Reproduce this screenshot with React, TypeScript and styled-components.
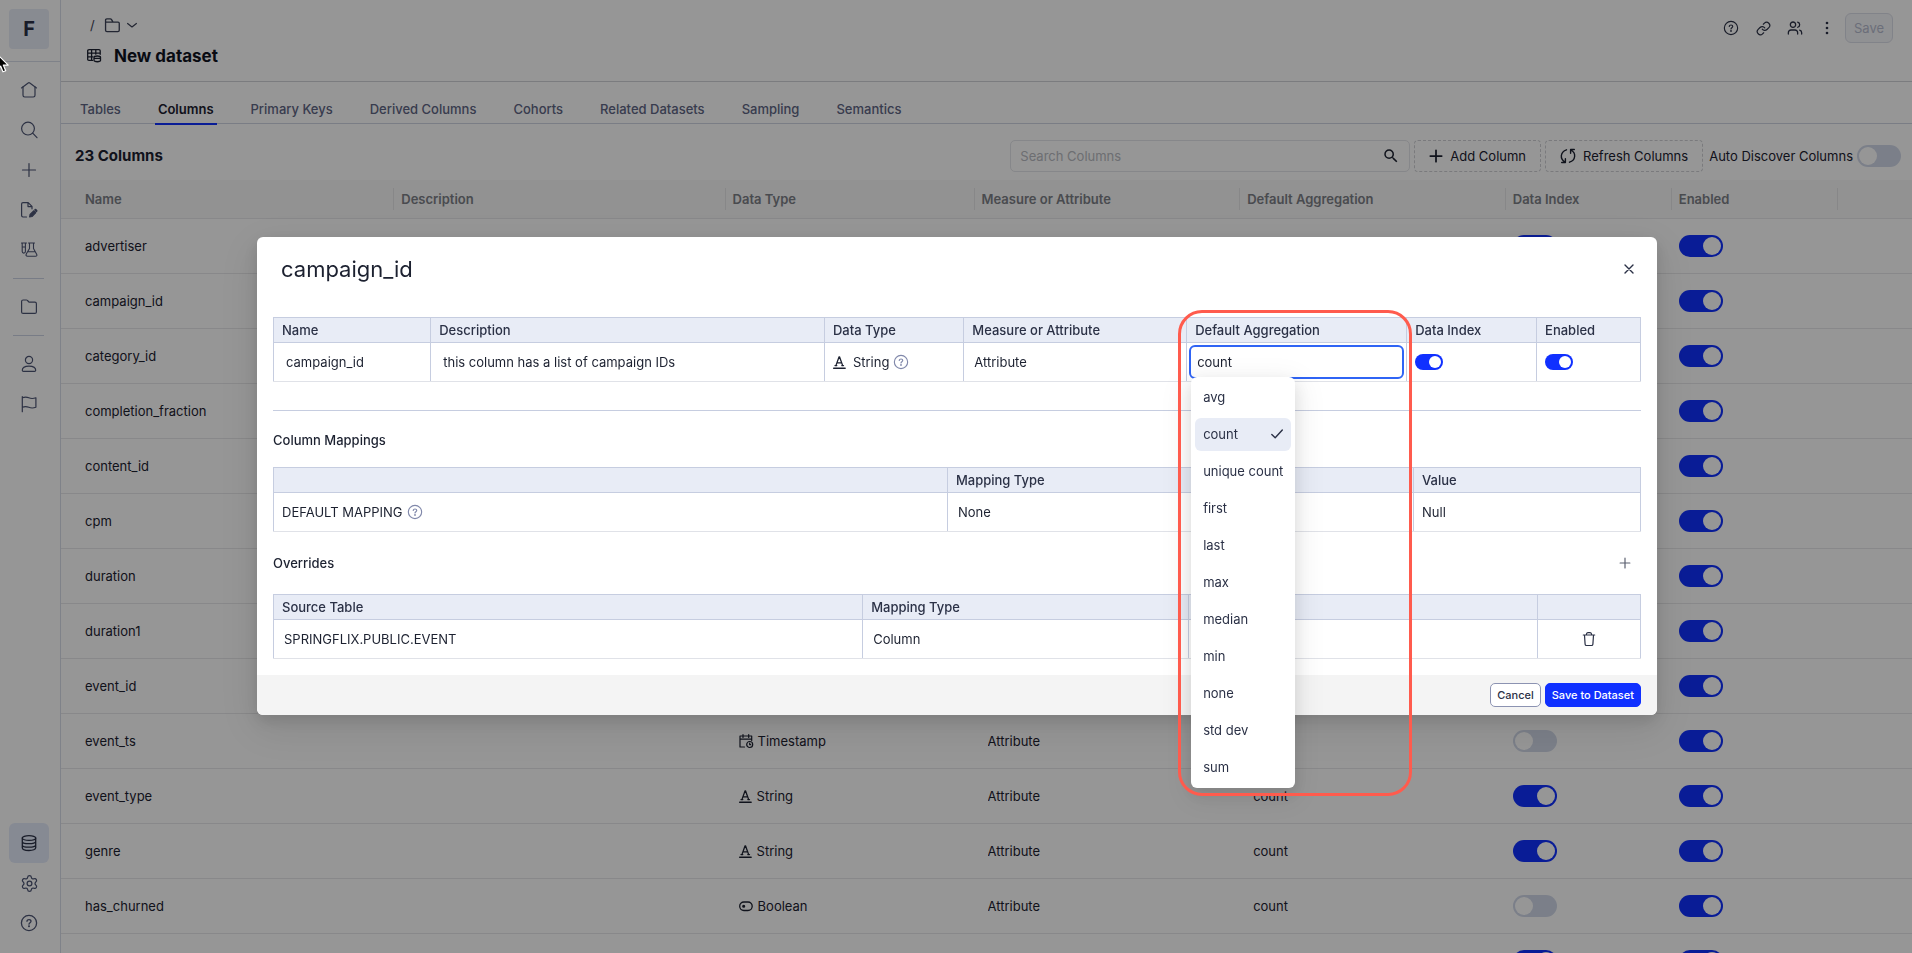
import React, { useState } from 'react';
import styled, { createGlobalStyle, css } from 'styled-components';
import { Link, Settings, Users } from 'lucide-react';
import { MdSearch } from 'react-icons/md';

const GlobalStyle = createGlobalStyle`
  *, *::before, *::after { box-sizing: border-box; }
  body {
    margin: 0;
    background: #ffffff;
    color: #1c2130;
    font-family: Inter, "Liberation Sans", sans-serif;
    font-size: 13px;
    line-height: 20px;
  }
  button, input, select { font: inherit; color: inherit; }
  button { cursor: pointer; }
  h1, h2, h3, p, ul { margin: 0; padding: 0; }
`;

/* ---------- icons ---------- */

type IconProps = { children: React.ReactNode; size?: number; box?: number; weight?: number };

const Svg = styled.svg`
  display: block;
  flex: none;
  overflow: visible;
`;

const Glyph = ({ children, size = 16, box = 16, weight = 1.2 }: IconProps) => (
  <Svg
    width={size}
    height={size}
    viewBox={`0 0 ${box} ${box}`}
    fill="none"
    stroke="currentColor"
    strokeWidth={weight}
    strokeLinecap="round"
    strokeLinejoin="round"
    aria-hidden="true"
  >
    {children}
  </Svg>
);

const HomeIcon = () => (
  <Glyph>
    <path d="M.5 5.9 7.2.9q.8-.6 1.6 0l6.7 5" />
    <path d="M2 4.9v8.4Q2 15 3.700 15h8.600q1.700 0 1.700-1.700V4.900" />
  </Glyph>
);
const SearchIcon = () => (
  <Glyph>
    <circle cx="7" cy="6.6" r="6.4" />
    <path d="m11.700 11.200 4.300 4.500" />
  </Glyph>
);
const PlusIcon = ({ size = 16, weight = 1.2 }: { size?: number; weight?: number }) => (
  <Glyph size={size} weight={weight}>
    <path d="M8 1.500v13M1.500 8h13" />
  </Glyph>
);
const DraftIcon = () => (
  <Glyph>
    <path d="M5.500 15H2Q.6 15 .6 13.600V2Q.6.600 2 .6h5.200L11 4.400v2.400M7 .8v3.800h3.800" />
    <path d="m8.600 15 .5-2.500 3.800-3.700 1.900 1.900-3.800 3.800z" fill="currentColor" />
    <path d="m14.400 7.900 1 1" strokeWidth="2.200" />
  </Glyph>
);
const LabIcon = () => (
  <Glyph weight={1.100}>
    <path d="M.5 1h5M1.200 1v8.500a1.600 1.600 0 0 0 3.200 0V1M1.200 5h3.200" />
    <path d="M7.500 1h6M8.500 1v5.500L5.400 11.700q-1.200 2.500 1.200 2.500h7.800q2.300 0 1.100-2.300L12.500 6.500V1M7 9.800h7.200" />
  </Glyph>
);
const FolderIcon = ({ size = 16 }: { size?: number }) => (
  <Glyph size={size}>
    <path d="M.6 12.900V2.500Q.6 1 2.100 1h3.300q.7 0 1.100.5l1.500 1.700h5.900q1.500 0 1.500 1.500v8.200q0 1.500-1.500 1.500H2.100Q.6 14.400.6 12.900z" />
  </Glyph>
);
const FolderTabIcon = () => (
  <Glyph size={15} weight={1.400}>
    <path d="M.6 4.300h13.300q1.300 0 1.300 1.300v7.400q0 1.500-1.500 1.500H2.100Q.6 14.500.6 13V2.200Q.6 1 1.900 1h3.800q.8 0 1.300.8l1.400 2.400" />
  </Glyph>
);
const PersonIcon = () => (
  <Glyph>
    <circle cx="8" cy="4" r="3.600" />
    <path d="M1.300 14.200c0-2.600 2.800-4.100 6.700-4.100s6.700 1.500 6.700 4.100q0 1.200-1.200 1.200h-11q-1.200 0-1.200-1.200z" />
  </Glyph>
);
const FlagIcon = () => (
  <Glyph>
    <path d="M1.300.5v15.200M1.300 1.800c2.500-1 4.500-.9 6.500 0s4.300 1 7.100 0v9.500c-2.800 1-5 .9-7.100 0s-4.500-.9-6.500 0" />
  </Glyph>
);
const DatabaseIcon = () => (
  <Glyph weight={1.300}>
    <ellipse cx="8" cy="3" rx="6.700" ry="2.400" />
    <path d="M1.300 3v9.800C1.300 14.400 4 15.500 8 15.500s6.700-1.100 6.700-2.700V3M1.300 6.400C1.300 7.900 4 8.700 8 8.700s6.700-.8 6.700-2.300M1.300 9.900c0 1.500 2.700 2.300 6.700 2.300s6.700-.8 6.700-2.300" />
  </Glyph>
);
const HelpIcon = ({ size = 16 }: { size?: number }) => (
  <Glyph size={size} weight={1.300}>
    <circle cx="8" cy="8" r="7.600" />
    <path d="M6 6.300C6 4 10 4 10 6.300 10 7.700 8 7.700 8 9.200" />
    <circle cx="8" cy="11.300" r=".4" fill="currentColor" />
  </Glyph>
);
const ChevronIcon = () => (
  <Glyph size={10} box={10} weight={1.200}>
    <path d="m.6 3.500 4.400 3.500 4.400-3.500" />
  </Glyph>
);
const DatasetIcon = () => (
  <Glyph size={14} box={14} weight={1.300}>
    <path d="M5.500 11.400H2Q.7 11.400.7 10.200V1.800Q.7.700 2 .7h10q1.200 0 1.200 1.100v3.500M.7 4.200h12.500M.7 7.800h5M4.600.7v10.700M8.800.7v4.500" />
    <path d="M7 8.200c0-1.600 6.500-1.600 6.500 0v3.400c0 1.500-6.500 1.500-6.500 0zM7 8.400c0 1.400 6.500 1.400 6.500 0" />
  </Glyph>
);
const DotsIcon = () => (
  <Svg width="16" height="16" viewBox="0 0 16 16" fill="currentColor" aria-hidden="true">
    <circle cx="8" cy="3" r="1.300" />
    <circle cx="8" cy="8" r="1.300" />
    <circle cx="8" cy="13" r="1.300" />
  </Svg>
);
const RefreshIcon = () => (
  <Glyph weight={1.400}>
    <path d="M6.500 1.800C.2 3.800-.4 11 5 14M1.700 14.500h3.700v-3.700" />
    <path d="M9.500 14.200C15.800 12.200 16.400 5 11 2M14.300 1.500h-3.700v3.700" />
  </Glyph>
);
const TextTypeIcon = () => (
  <Glyph size={13} box={13} weight={1.300}>
    <path d="M2.900 9.600 6.100.8h.4l3.200 8.800M4 6.900h4.600M2 9.600h1.800M8.800 9.600h1.700" />
    <path d="M.7 12.300h11.400" strokeWidth="1.500" />
  </Glyph>
);
const CalendarIcon = () => (
  <Glyph size={14} box={14} weight={1.200}>
    <path d="M5.500 13H1V2h11.700v4.500M1 5.200h11.700M4 .5v3M9.700.5v3" />
    <circle cx="10.700" cy="10.500" r="3" />
    <path d="M10.700 9v1.700h1" />
  </Glyph>
);
const BooleanIcon = () => (
  <Glyph size={14} box={14} weight={1.300}>
    <rect x=".7" y="3" width="12.500" height="8.500" rx="4.200" />
    <circle cx="4.700" cy="7.200" r=".9" fill="currentColor" />
  </Glyph>
);
const CloseIcon = () => (
  <Glyph size={10} box={10} weight={1.400}>
    <path d="m1 1 8 8M9 1 1 9" />
  </Glyph>
);
const CheckIcon = () => (
  <Glyph size={12} box={12} weight={1.400}>
    <path d="m.8 6.500 3.400 3.300L11.300 2" />
  </Glyph>
);
const TrashIcon = () => (
  <Glyph size={14} box={14} weight={1.200}>
    <path d="M1.300 3h11.400M4.300 2.800Q4.500.6 5.800.6h2.400q1.300 0 1.500 2.200M2.500 3.200l.6 8.900q.1 1.400 1.400 1.400h5q1.300 0 1.400-1.400l.6-8.900" />
  </Glyph>
);

/* ---------- shared controls ---------- */

const Switch = styled.input.attrs({ type: 'checkbox', role: 'switch' })<{ $small?: boolean }>`
  appearance: none;
  display: block;
  position: relative;
  flex: none;
  margin: 0;
  width: ${p => (p.$small ? 28 : 44)}px;
  height: ${p => (p.$small ? 16 : 22)}px;
  border-radius: 11px;
  background: #d2d9e9;
  cursor: pointer;
  &::before {
    content: '';
    position: absolute;
    top: 2px;
    left: 2px;
    width: ${p => (p.$small ? 12 : 18)}px;
    height: ${p => (p.$small ? 12 : 18)}px;
    border-radius: 50%;
    background: #ffffff;
  }
  &:checked { background: #1030ff; }
  &:checked::before { left: auto; right: 2px; }
`;

const PlainSelect = styled.select`
  appearance: none;
  display: block;
  width: 100%;
  height: 24px;
  padding: 0 2px;
  border: 0;
  background: transparent;
`;

const PlainInput = styled.input`
  display: block;
  width: 100%;
  height: 24px;
  padding: 0 4px;
  border: 0;
  background: transparent;
`;

const IconButton = styled.button<{ $tone?: string }>`
  display: grid;
  place-items: center;
  width: 32px;
  height: 32px;
  padding: 0;
  border: 0;
  background: transparent;
  color: ${p => p.$tone ?? '#2b3146'};
`;

/* ---------- page frame ---------- */

const Page = styled.div`
  display: flex;
  height: 100vh;
  overflow: hidden;
`;

const Sidebar = styled.nav`
  display: flex;
  flex-direction: column;
  flex: none;
  width: 61px;
  padding-bottom: 10px;
  border-right: 1px solid #d9dde9;
`;

const LogoArea = styled.div`
  height: 62px;
  padding: 9px;
  border-bottom: 1px solid #d9dde9;
`;

const Logo = styled.a`
  display: grid;
  place-items: center;
  width: 40px;
  height: 40px;
  border-radius: 4px;
  background: #e8ecf6;
  color: #2b3146;
  font-size: 20px;
  font-weight: 700;
  text-decoration: none;
`;

const NavGroup = styled.div<{ $end?: boolean }>`
  display: flex;
  flex-direction: column;
  padding: 8px 9px;
  ${p => p.$end && css`margin-top: auto; padding-bottom: 0;`}
`;

const NavLink = styled.a<{ $active?: boolean }>`
  display: grid;
  place-items: center;
  width: 40px;
  height: 40px;
  border-radius: 6px;
  color: ${p => (p.$active ? '#2b3146' : '#4d5574')};
  background: ${p => (p.$active ? '#e4eafa' : 'transparent')};
`;

const NavRule = styled.hr`
  width: 31px;
  margin: 0 13px;
  border: 0;
  border-top: 1px solid #cdd3e4;
`;

const Main = styled.main`
  display: flex;
  flex-direction: column;
  flex: 1;
  min-width: 0;
`;

const Header = styled.header`
  display: flex;
  justify-content: space-between;
  flex: none;
  height: 82px;
  padding: 12px 19px 0 26px;
  border-bottom: 1px solid #d2d3d9;
`;

const Breadcrumb = styled.div`
  display: flex;
  align-items: center;
  gap: 7px;
  height: 26px;
  padding-left: 3px;
  color: #3c4257;
`;

const Slash = styled.span`
  width: 8px;
`;

const TitleRow = styled.div`
  display: flex;
  align-items: center;
  gap: 13px;
  height: 36px;
`;

const PageTitle = styled.h1`
  font-size: 17px;
  line-height: 24px;
  font-weight: 700;
  color: #10131f;
`;

const HeaderActions = styled.div`
  display: flex;
  height: 32px;
`;

const SaveButton = styled.button`
  width: 48px;
  height: 30px;
  margin: 1px 0 0 2px;
  padding: 0;
  border: 1px solid #dcdfe9;
  border-radius: 6px;
  background: #f5f6fa;
  color: #b7bccf;
`;

const Tabs = styled.div`
  display: flex;
  gap: 31px;
  flex: none;
  height: 42px;
  padding: 0 16px;
  border-bottom: 1px solid #d0d4e2;
`;

const Tab = styled.button<{ $active?: boolean }>`
  height: 43px;
  padding: 13px 3px 0;
  border: 0;
  border-bottom: 2px solid ${p => (p.$active ? '#1030ff' : 'transparent')};
  background: transparent;
  color: ${p => (p.$active ? '#1c2130' : '#5f6685')};
  font-weight: ${p => (p.$active ? 600 : 500)};
  white-space: nowrap;
`;

const Toolbar = styled.div`
  display: flex;
  align-items: center;
  gap: 4px;
  flex: none;
  height: 56px;
  padding: 8px 11px 0 14px;
`;

const Count = styled.h2`
  flex: 1;
  font-size: 15px;
  line-height: 24px;
  font-weight: 700;
`;

const SearchBox = styled.label`
  display: flex;
  align-items: center;
  width: 400px;
  height: 32px;
  padding: 0 9px;
  border: 1px solid #e4e5ea;
  border-radius: 5px;
`;

const SearchInput = styled.input`
  flex: 1;
  min-width: 0;
  padding: 0;
  border: 0;
  background: transparent;
  &::placeholder { color: #b9bbc2; opacity: 1; }
`;

const DashedButton = styled.button`
  display: flex;
  align-items: center;
  gap: 7px;
  height: 32px;
  padding: 0 14px;
  border: 1px dashed #cfd0d4;
  border-radius: 4px;
  background: transparent;
  white-space: nowrap;
`;

const SwitchLabel = styled.label`
  display: flex;
  align-items: center;
  gap: 4px;
  padding-left: 2px;
  white-space: nowrap;
`;

/* ---------- column list ---------- */

const ListTable = styled.table`
  width: 100%;
  table-layout: fixed;
  border-collapse: separate;
  border-spacing: 0;
`;

const ListHead = styled.th`
  position: relative;
  height: 39px;
  padding: 0 8px;
  border-bottom: 1px solid #e8e8ea;
  background: #f8f8f8;
  color: #7d8087;
  font-weight: 600;
  text-align: left;
  &:first-child { padding-left: 24px; }
  &:not(:first-child)::before {
    content: '';
    position: absolute;
    left: 0;
    top: 8px;
    width: 1px;
    height: 22px;
    background: #e6e6e8;
  }
`;

const ListCell = styled.td<{ $pad?: number }>`
  height: 55px;
  padding: 0 8px 0 ${p => p.$pad ?? 8}px;
  border-bottom: 1px solid #e8e8ea;
`;

const TypeLabel = styled.span`
  display: flex;
  align-items: center;
  gap: 5px;
`;

/* ---------- dialog ---------- */

const Backdrop = styled.div`
  position: fixed;
  inset: 0;
  display: flex;
  align-items: center;
  justify-content: center;
  padding: 0 0 1px 2px;
  background: rgba(0, 0, 0, 0.41);
`;

const Dialog = styled.section`
  width: min(1400px, calc(100% - 64px));
  border-radius: 6px;
  background: #ffffff;
  box-shadow: 0 6px 16px rgba(0, 0, 0, 0.12), 0 12px 40px 8px rgba(0, 0, 0, 0.08);
`;

const DialogHeader = styled.div`
  display: flex;
  align-items: center;
  justify-content: space-between;
  height: 64px;
  padding: 0 12px 0 24px;
`;

const DialogTitle = styled.h2`
  font-size: 22px;
  line-height: 32px;
  font-weight: 400;
`;

const DialogBody = styled.div`
  padding: 16px;
`;

const Rule = styled.hr`
  margin: 28px 0 19px;
  border: 0;
  border-top: 1px solid #c6cde0;
`;

const SectionHead = styled.div<{ $spaced?: boolean }>`
  display: flex;
  align-items: center;
  justify-content: space-between;
  height: 20px;
  margin: ${p => (p.$spaced ? 21 : 0)}px 0 ${p => (p.$spaced ? 21 : 17)}px;
`;

const SectionTitle = styled.h3`
  font-size: 13px;
  line-height: 20px;
  font-weight: 500;
`;

const DetailTable = styled.table`
  width: 100%;
  table-layout: fixed;
  border-collapse: collapse;
`;

const DetailHead = styled.th`
  height: 25px;
  padding: 0 8px;
  border: 1px solid #c6cde0;
  background: #e8ecf6;
  color: #2b3146;
  font-weight: 500;
  text-align: left;
`;

const DetailCell = styled.td<{ $tight?: boolean }>`
  height: 39px;
  padding: 0 ${p => (p.$tight ? 2 : 8)}px;
  border: 1px solid #c6cde0;
  border-bottom-color: #e0e2e8;
`;

const Inline = styled.span<{ $gap: number }>`
  display: flex;
  align-items: center;
  gap: ${p => p.$gap}px;
`;

const Muted = styled.span`
  color: #8088aa;
`;

const Center = styled.div`
  display: grid;
  place-items: center;
`;

const Combo = styled.div`
  position: relative;
`;

const ComboInput = styled.input`
  display: block;
  width: 100%;
  height: 34px;
  padding: 0 6px;
  border: 2px solid #2f64f5;
  border-radius: 6px;
  background: #ffffff;
  outline: none;
`;

const Options = styled.ul`
  position: absolute;
  z-index: 1;
  top: 32px;
  left: 2px;
  display: flex;
  flex-direction: column;
  gap: 4px;
  min-width: 102px;
  padding: 4px;
  border-radius: 6px;
  background: #ffffff;
  list-style: none;
  box-shadow: 0 6px 16px rgba(0, 0, 0, 0.1), 0 9px 28px 8px rgba(0, 0, 0, 0.06);
`;

const Option = styled.li<{ $selected: boolean }>`
  display: flex;
  align-items: center;
  justify-content: space-between;
  height: 33px;
  padding: 0 8px 2px;
  border-radius: 6px;
  background: ${p => (p.$selected ? '#e8ecf6' : 'transparent')};
  color: #2b3146;
  white-space: nowrap;
  cursor: pointer;
`;

const Callout = styled.div`
  position: absolute;
  z-index: 2;
  top: -35px;
  left: -11px;
  right: -8px;
  height: 486px;
  border: 3px solid #ff5b4d;
  border-radius: 24px;
  pointer-events: none;
`;

const DialogFooter = styled.div`
  display: flex;
  align-items: center;
  justify-content: flex-end;
  gap: 4px;
  height: 40px;
  padding: 0 16px;
  border-radius: 0 0 6px 6px;
  background: #f4f4f4;
`;

const SmallButton = styled.button<{ $primary?: boolean }>`
  height: 24px;
  padding: 0 6px;
  border: 1px solid ${p => (p.$primary ? '#1030ff' : '#8c93b2')};
  border-radius: 5px;
  background: ${p => (p.$primary ? '#1030ff' : '#ffffff')};
  color: ${p => (p.$primary ? '#ffffff' : '#2b3146')};
  font-size: 11px;
  line-height: 16px;
  font-weight: 500;
  white-space: nowrap;
`;

const Pointer = styled.svg`
  position: fixed;
  top: 53px;
  left: -4px;
  pointer-events: none;
`;

/* ---------- data ---------- */

const TABS = ['Tables', 'Columns', 'Primary Keys', 'Derived Columns', 'Cohorts', 'Related Datasets', 'Sampling', 'Semantics'];
const HEADS = ['Name', 'Description', 'Data Type', 'Measure or Attribute', 'Default Aggregation', 'Data Index', 'Enabled'];
const LIST_WIDTHS = ['17.95%', '17.9%', '13.45%', '14.35%', '14.35%', '8.97%', '8.97%'];
const DETAIL_WIDTHS = ['11.5%', '28.8%', '10.2%', '16.3%', '16.1%', '9.5%', '7.6%'];
const AGGREGATIONS = ['avg', 'count', 'unique count', 'first', 'last', 'max', 'median', 'min', 'none', 'std dev', 'sum'];

type Kind = 'String' | 'Timestamp' | 'Boolean';
type Column = { name: string; kind?: Kind; aggregation?: string; indexed: boolean };

const COLUMNS: Column[] = [
  { name: 'advertiser', indexed: true },
  { name: 'campaign_id', indexed: true },
  { name: 'category_id', indexed: true },
  { name: 'completion_fraction', indexed: false },
  { name: 'content_id', indexed: true },
  { name: 'cpm', indexed: false },
  { name: 'duration', indexed: false },
  { name: 'duration1', indexed: false },
  { name: 'event_id', indexed: true },
  { name: 'event_ts', kind: 'Timestamp', indexed: false },
  { name: 'event_type', kind: 'String', aggregation: 'count', indexed: true },
  { name: 'genre', kind: 'String', aggregation: 'count', indexed: true },
  { name: 'has_churned', kind: 'Boolean', aggregation: 'count', indexed: false },
  { name: '', indexed: true },
];

const KIND_ICONS: Record<Kind, React.ReactNode> = {
  String: <TextTypeIcon />,
  Timestamp: <CalendarIcon />,
  Boolean: <BooleanIcon />,
};

const ColGroup = ({ widths }: { widths: string[] }) => (
  <colgroup>
    {widths.map((width, i) => <col key={i} style={{ width }} />)}
    {widths === LIST_WIDTHS && <col />}
  </colgroup>
);

const ColumnRow = ({ column }: { column: Column }) => (
  <tr>
    <ListCell $pad={24}>{column.name}</ListCell>
    <ListCell />
    <ListCell $pad={14}>
      {column.kind && <TypeLabel>{KIND_ICONS[column.kind]}{column.kind}</TypeLabel>}
    </ListCell>
    <ListCell $pad={12}>
      {column.kind && (
        <PlainSelect aria-label={`${column.name} role`} defaultValue="Attribute"><option>Attribute</option></PlainSelect>
      )}
    </ListCell>
    <ListCell $pad={12}>
      {column.aggregation && (
        <PlainSelect aria-label={`${column.name} aggregation`} defaultValue={column.aggregation}>
          <option>{column.aggregation}</option>
        </PlainSelect>
      )}
    </ListCell>
    <ListCell><Switch defaultChecked={column.indexed} aria-label={`Index ${column.name}`} /></ListCell>
    <ListCell><Switch defaultChecked aria-label={`Enable ${column.name}`} /></ListCell>
    <ListCell />
  </tr>
);

const AggregationPicker = () => {
  const [value, setValue] = useState('count');
  return (
    <Combo>
      <ComboInput
        role="combobox"
        aria-label="Default Aggregation"
        aria-expanded="true"
        aria-controls="aggregations"
        value={value}
        onChange={e => setValue(e.target.value)}
      />
      <Options role="listbox" id="aggregations">
        {AGGREGATIONS.map(name => (
          <Option key={name} role="option" aria-selected={name === value} $selected={name === value} onClick={() => setValue(name)}>
            {name}
            {name === value && <CheckIcon />}
          </Option>
        ))}
      </Options>
      <Callout />
    </Combo>
  );
};

const ColumnDialog = () => (
  <Backdrop>
    <Dialog role="dialog" aria-modal="true" aria-labelledby="dialog-title">
      <DialogHeader>
        <DialogTitle id="dialog-title">campaign_id</DialogTitle>
        <IconButton aria-label="Close"><CloseIcon /></IconButton>
      </DialogHeader>
      <DialogBody>
        <DetailTable>
          <ColGroup widths={DETAIL_WIDTHS} />
          <thead>
            <tr>{HEADS.map(h => <DetailHead key={h}>{h}</DetailHead>)}</tr>
          </thead>
          <tbody>
            <tr>
              <DetailCell><PlainInput aria-label="Name" defaultValue="campaign_id" /></DetailCell>
              <DetailCell><PlainInput aria-label="Description" defaultValue="this column has a list of campaign IDs" /></DetailCell>
              <DetailCell>
                <Inline $gap={5}>
                  <Inline $gap={7}><TextTypeIcon />String</Inline>
                  <Muted><HelpIcon size={14} /></Muted>
                </Inline>
              </DetailCell>
              <DetailCell>
                <PlainSelect aria-label="Measure or Attribute" defaultValue="Attribute"><option>Attribute</option></PlainSelect>
              </DetailCell>
              <DetailCell $tight><AggregationPicker /></DetailCell>
              <DetailCell><Switch $small defaultChecked aria-label="Data Index" /></DetailCell>
              <DetailCell><Switch $small defaultChecked aria-label="Enabled" /></DetailCell>
            </tr>
          </tbody>
        </DetailTable>
        <Rule />
        <SectionHead><SectionTitle>Column Mappings</SectionTitle></SectionHead>
        <DetailTable>
          <ColGroup widths={['49.3%', '34.1%', '16.6%']} />
          <thead>
            <tr>
              <DetailHead />
              <DetailHead>Mapping Type</DetailHead>
              <DetailHead>Value</DetailHead>
            </tr>
          </thead>
          <tbody>
            <tr>
              <DetailCell>
                <Inline $gap={5}>DEFAULT MAPPING<Muted><HelpIcon size={14} /></Muted></Inline>
              </DetailCell>
              <DetailCell>
                <PlainSelect aria-label="Default mapping type" defaultValue="None"><option>None</option></PlainSelect>
              </DetailCell>
              <DetailCell>Null</DetailCell>
            </tr>
          </tbody>
        </DetailTable>
        <SectionHead $spaced>
          <SectionTitle>Overrides</SectionTitle>
          <IconButton aria-label="Add override" $tone="#5b6070"><PlusIcon size={12} weight={1.600} /></IconButton>
        </SectionHead>
        <DetailTable>
          <ColGroup widths={['43.1%', '23.8%', '25.6%', '7.5%']} />
          <thead>
            <tr>
              <DetailHead>Source Table</DetailHead>
              <DetailHead>Mapping Type</DetailHead>
              <DetailHead />
              <DetailHead />
            </tr>
          </thead>
          <tbody>
            <tr>
              <DetailCell>
                <PlainSelect aria-label="Source Table" defaultValue="SPRINGFLIX.PUBLIC.EVENT"><option>SPRINGFLIX.PUBLIC.EVENT</option></PlainSelect>
              </DetailCell>
              <DetailCell>
                <PlainSelect aria-label="Override mapping type" defaultValue="Column"><option>Column</option></PlainSelect>
              </DetailCell>
              <DetailCell />
              <DetailCell><Center><IconButton aria-label="Delete override"><TrashIcon /></IconButton></Center></DetailCell>
            </tr>
          </tbody>
        </DetailTable>
      </DialogBody>
      <DialogFooter>
        <SmallButton>Cancel</SmallButton>
        <SmallButton $primary>Save to Dataset</SmallButton>
      </DialogFooter>
    </Dialog>
  </Backdrop>
);

export default function App() {
  return (
    <>
      <GlobalStyle />
      <Page>
        <Sidebar aria-label="Main">
          <LogoArea><Logo href="#">F</Logo></LogoArea>
          <NavGroup>
            <NavLink href="#" aria-label="Home"><HomeIcon /></NavLink>
            <NavLink href="#" aria-label="Search"><SearchIcon /></NavLink>
            <NavLink href="#" aria-label="Create"><PlusIcon /></NavLink>
            <NavLink href="#" aria-label="Drafts"><DraftIcon /></NavLink>
            <NavLink href="#" aria-label="Experiments"><LabIcon /></NavLink>
          </NavGroup>
          <NavRule />
          <NavGroup>
            <NavLink href="#" aria-label="Files"><FolderIcon /></NavLink>
          </NavGroup>
          <NavRule />
          <NavGroup>
            <NavLink href="#" aria-label="People"><PersonIcon /></NavLink>
            <NavLink href="#" aria-label="Flags"><FlagIcon /></NavLink>
          </NavGroup>
          <NavGroup $end>
            <NavLink href="#" aria-label="Datasets" $active><DatabaseIcon /></NavLink>
            <NavLink href="#" aria-label="Settings"><Settings size={19} strokeWidth={1.600} /></NavLink>
            <NavLink href="#" aria-label="Help"><HelpIcon /></NavLink>
          </NavGroup>
        </Sidebar>
        <Main>
          <Header>
            <div>
              <Breadcrumb>
                <Slash>/</Slash>
                <FolderTabIcon />
                <ChevronIcon />
              </Breadcrumb>
              <TitleRow>
                <DatasetIcon />
                <PageTitle>New dataset</PageTitle>
              </TitleRow>
            </div>
            <HeaderActions>
              <IconButton aria-label="Help"><HelpIcon size={14} /></IconButton>
              <IconButton aria-label="Copy link"><Link size={15} strokeWidth={1.900} /></IconButton>
              <IconButton aria-label="Share"><Users size={16} strokeWidth={1.900} /></IconButton>
              <IconButton aria-label="More"><DotsIcon /></IconButton>
              <SaveButton disabled>Save</SaveButton>
            </HeaderActions>
          </Header>
          <Tabs role="tablist">
            {TABS.map(tab => (
              <Tab key={tab} role="tab" aria-selected={tab === 'Columns'} $active={tab === 'Columns'}>{tab}</Tab>
            ))}
          </Tabs>
          <Toolbar>
            <Count>23 Columns</Count>
            <SearchBox>
              <SearchInput placeholder="Search Columns" aria-label="Search Columns" />
              <MdSearch size={18} />
            </SearchBox>
            <DashedButton><PlusIcon size={14} weight={2} />Add Column</DashedButton>
            <DashedButton><RefreshIcon />Refresh Columns</DashedButton>
            <SwitchLabel>Auto Discover Columns<Switch /></SwitchLabel>
          </Toolbar>
          <ListTable>
            <ColGroup widths={LIST_WIDTHS} />
            <thead>
              <tr>
                {HEADS.map(h => <ListHead key={h}>{h}</ListHead>)}
                <ListHead />
              </tr>
            </thead>
            <tbody>
              {COLUMNS.map((column, i) => <ColumnRow key={i} column={column} />)}
            </tbody>
          </ListTable>
        </Main>
      </Page>
      <ColumnDialog />
      <Pointer width="14" height="20" viewBox="-1 -1 14 20" aria-hidden="true">
        <path d="M0 0v15.500l3.600-3.400 2.400 5.700 2.700-1.100-2.400-5.600h4.900z" fill="#000" stroke="#fff" strokeWidth="1.200" strokeLinejoin="round" />
      </Pointer>
    </>
  );
}
